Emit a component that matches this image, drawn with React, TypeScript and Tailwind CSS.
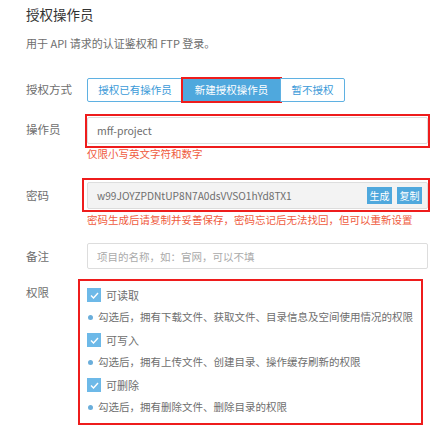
import { useState } from 'react'

const font = { fontFamily: '"Noto Sans CJK SC", "Liberation Sans", sans-serif' }

function Check({ label, desc }: { label: string; desc: string }) {
  return (
    <div>
      <div className="flex items-center gap-[5px] h-[20px]">
        <span className="w-[14px] h-[14px] bg-[#6db9e8] flex items-center justify-center">
          <svg width="9" height="7" viewBox="0 0 9 7" fill="none">
            <path d="M1 3.5 L3.5 6 L8 1" stroke="#fff" strokeWidth="1.4" />
          </svg>
        </span>
        <span className="text-[11px] text-[#6e6e6e]">{label}</span>
      </div>
      <div className="flex items-center gap-[5px] h-[20px] mt-[2px]">
        <span className="w-[5px] h-[5px] rounded-full bg-[#6aaedb] ml-[1px]" />
        <span className="text-[10.5px] text-[#6e6e6e]">{desc}</span>
      </div>
    </div>
  )
}

export default function App() {
  const [mode, setMode] = useState(1)
  const modes = ['授权已有操作员', '新建授权操作员', '暂不授权']
  const widths = ['w-[96px]', 'w-[99px]', 'w-[65px]']

  return (
    <div className="w-[447px] h-[432px] bg-white pl-[26px] pr-[19px] pt-[4px] overflow-hidden" style={font}>
      <h1 className="text-[13.5px] leading-[20px] text-[#333]">授权操作员</h1>
      <p className="text-[11px] leading-[16px] text-[#6e6e6e] mt-[11px]">用于 API 请求的认证鉴权和 FTP 登录。</p>

      {/* 授权方式 */}
      <div className="flex items-center mt-[27px] h-[24px]">
        <div className="w-[61px] text-[11.5px] text-[#6e6e6e]">授权方式</div>
        <div className="flex h-[24px]">
          {modes.map((m, i) => (
            <button
              key={m}
              onClick={() => setMode(i)}
              className={`relative ${widths[i]} h-[24px] text-[10.5px] border border-[#5fb1e2] ${i > 0 ? '-ml-px' : ''} ${i === 0 ? 'rounded-l-[2px]' : ''} ${i === 2 ? 'rounded-r-[2px]' : ''} ${mode === i ? 'bg-[#4fa8dd] text-white' : 'bg-white text-[#3b9ad8]'}`}
            >
              {m}
              {i === 1 && <span className="absolute -inset-[2px] border-2 border-[#ee1c1c] pointer-events-none" />}
            </button>
          ))}
        </div>
      </div>

      {/* 操作员 */}
      <div className="flex mt-[14px]">
        <div className="w-[61px] text-[11.5px] text-[#6e6e6e] leading-[27px]">操作员</div>
        <div className="flex-1">
          <div className="relative">
            <input
              defaultValue="mff-project"
              className="w-full h-[27px] border border-[#ddd] rounded-[2px] px-[9px] text-[10.5px] text-[#6e6e6e] outline-none"
            />
            <span className="absolute -left-[2px] -right-[2px] -top-[2px] -bottom-[4px] border-2 border-[#ee1c1c] pointer-events-none" />
          </div>
          <p className="text-[10.5px] leading-[16px] text-[#ef5b3e] mt-[2px]">仅限小写英文字符和数字</p>
        </div>
      </div>

      {/* 密码 */}
      <div className="flex mt-[20px]">
        <div className="w-[61px] text-[11.5px] text-[#6e6e6e] leading-[27px]">密码</div>
        <div className="flex-1">
          <div className="relative">
            <div className="flex items-center h-[27px] border border-[#ddd] rounded-[2px] bg-[#f3f3f3] pl-[9px] pr-[5px]">
              <span className="flex-1 text-[10.2px] text-[#6e6e6e]">w99JOYZPDNtUP8N7A0dsVVSO1hYd8TX1</span>
              <button className="w-[25px] h-[17px] bg-[#4fa8dd] text-white text-[10px] leading-[17px]">生成</button>
              <button className="w-[25px] h-[17px] bg-[#4fa8dd] text-white text-[10px] leading-[17px] ml-[5px]">复制</button>
            </div>
            <span className="absolute -left-[5px] -right-[2px] -top-[4px] -bottom-[3px] border-2 border-[#ee1c1c] pointer-events-none" />
          </div>
          <p className="text-[10.5px] leading-[16px] text-[#ef5b3e] mt-[3px] whitespace-nowrap">密码生成后请复制并妥善保存，密码忘记后无法找回，但可以重新设置</p>
        </div>
      </div>

      {/* 备注 */}
      <div className="flex mt-[15px]">
        <div className="w-[61px] text-[11.5px] text-[#6e6e6e] leading-[26px]">备注</div>
        <input
          placeholder="项目的名称，如：官网，可以不填"
          className="flex-1 h-[26px] border border-[#ddd] rounded-[2px] px-[9px] text-[10.5px] text-[#6e6e6e] placeholder:text-[#aaa] outline-none"
        />
      </div>

      {/* 权限 */}
      <div className="flex mt-[10px]">
        <div className="w-[61px] text-[11.5px] text-[#6e6e6e] leading-[16px] pt-[5px]">权限</div>
        <div className="relative flex-1 pt-[6px] flex flex-col gap-[3px]">
          <Check label="可读取" desc="勾选后，拥有下载文件、获取文件、目录信息及空间使用情况的权限" />
          <Check label="可写入" desc="勾选后，拥有上传文件、创建目录、操作缓存刷新的权限" />
          <Check label="可删除" desc="勾选后，拥有删除文件、删除目录的权限" />
          <span className="absolute -left-[9px] right-[5px] top-0 h-[146px] border-2 border-[#ee1c1c] pointer-events-none" />
        </div>
      </div>
    </div>
  )
}
